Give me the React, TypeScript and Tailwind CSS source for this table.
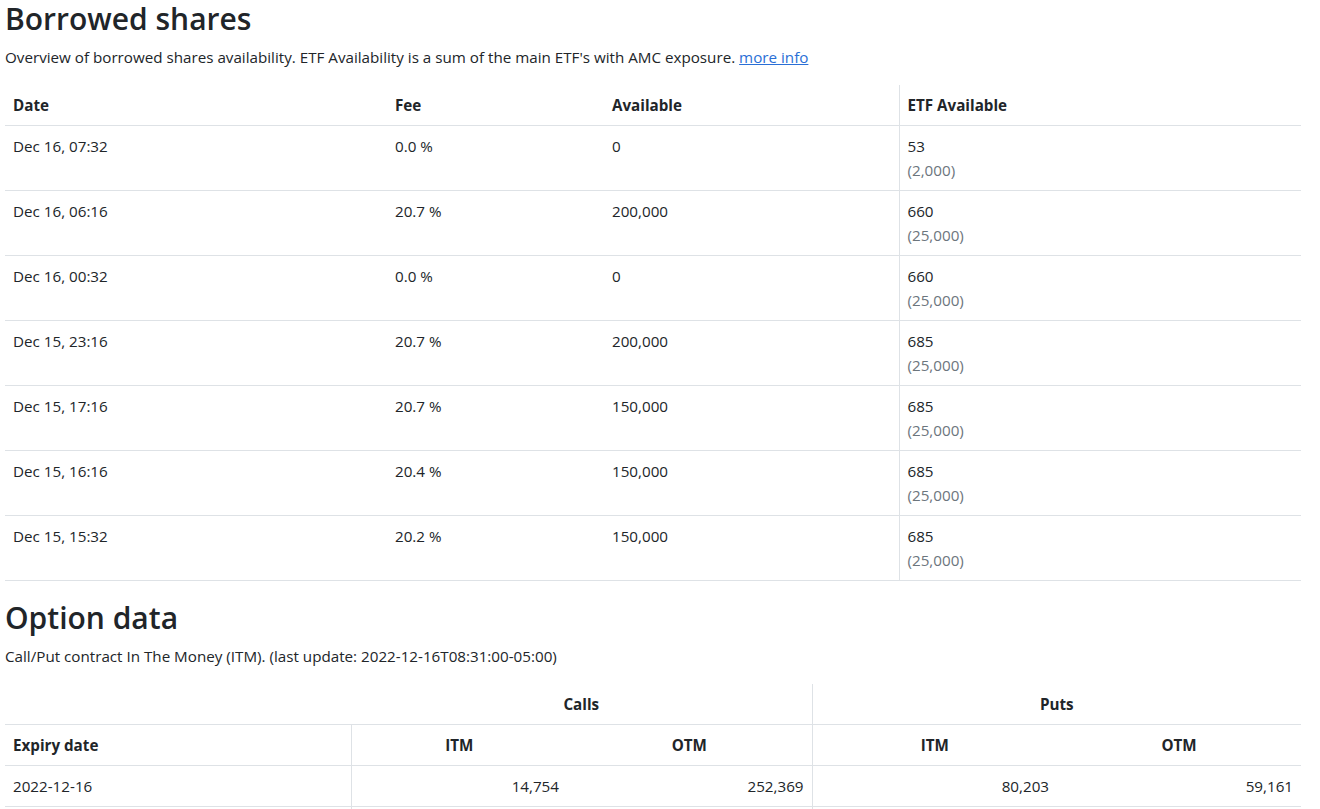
const borrowed = [
  { date: 'Dec 16, 07:32', fee: '0.0 %', available: '0', etf: '53', etfMax: '(2,000)' },
  { date: 'Dec 16, 06:16', fee: '20.7 %', available: '200,000', etf: '660', etfMax: '(25,000)' },
  { date: 'Dec 16, 00:32', fee: '0.0 %', available: '0', etf: '660', etfMax: '(25,000)' },
  { date: 'Dec 15, 23:16', fee: '20.7 %', available: '200,000', etf: '685', etfMax: '(25,000)' },
  { date: 'Dec 15, 17:16', fee: '20.7 %', available: '150,000', etf: '685', etfMax: '(25,000)' },
  { date: 'Dec 15, 16:16', fee: '20.4 %', available: '150,000', etf: '685', etfMax: '(25,000)' },
  { date: 'Dec 15, 15:32', fee: '20.2 %', available: '150,000', etf: '685', etfMax: '(25,000)' },
];

const options = [
  { expiry: '2022-12-16', callItm: '14,754', callOtm: '252,369', putItm: '80,203', putOtm: '59,161' },
];

export default function App() {
  return (
    <div
      className="min-h-screen bg-white pl-[5px] text-[15.2px] leading-6 text-[#212529]"
      style={{ fontFamily: '"Open Sans", "Noto Sans", sans-serif' }}
    >
      <div className="w-[1296px]">
        <h2 className="mb-2 text-[30px] font-semibold leading-[37px]">Borrowed shares</h2>
        <p className="mb-4">
          Overview of borrowed shares availability. ETF Availability is a sum of the main ETF's with AMC exposure.{' '}
          <a href="#" className="text-[#2a6fd6] underline">
            more info
          </a>
        </p>

        <table className="mb-[18px] w-full table-fixed border-collapse text-left">
          <colgroup>
            <col className="w-[382px]" />
            <col className="w-[217px]" />
            <col className="w-[295px]" />
            <col className="w-[402px]" />
          </colgroup>
          <thead>
            <tr className="border-b border-[#dee2e6]">
              <th className="p-2 font-bold">Date</th>
              <th className="p-2 font-bold">Fee</th>
              <th className="p-2 font-bold">Available</th>
              <th className="border-l border-[#dee2e6] p-2 font-bold">ETF Available</th>
            </tr>
          </thead>
          <tbody>
            {borrowed.map((row) => (
              <tr key={row.date} className="border-b border-[#dee2e6] align-top">
                <td className="p-2">{row.date}</td>
                <td className="p-2">{row.fee}</td>
                <td className="p-2">{row.available}</td>
                <td className="border-l border-[#dee2e6] p-2">
                  {row.etf}
                  <br />
                  <span className="text-[#6c757d]">{row.etfMax}</span>
                </td>
              </tr>
            ))}
          </tbody>
        </table>

        <h2 className="mb-2 text-[30px] font-semibold leading-[37px]">Option data</h2>
        <p className="mb-4">Call/Put contract In The Money (ITM). (last update: 2022-12-16T08:31:00-05:00)</p>

        <table className="w-full table-fixed border-collapse">
          <colgroup>
            <col className="w-[346px]" />
            <col className="w-[216px]" />
            <col className="w-[245px]" />
            <col className="w-[245px]" />
            <col className="w-[244px]" />
          </colgroup>
          <thead>
            <tr className="border-b border-[#dee2e6]">
              <th className="p-2"></th>
              <th colSpan={2} className="p-2 text-center font-bold">
                Calls
              </th>
              <th colSpan={2} className="border-l border-[#dee2e6] p-2 text-center font-bold">
                Puts
              </th>
            </tr>
            <tr className="border-b border-[#dee2e6]">
              <th className="p-2 text-left font-bold">Expiry date</th>
              <th className="border-l border-[#dee2e6] p-2 text-center font-bold">ITM</th>
              <th className="p-2 text-center font-bold">OTM</th>
              <th className="border-l border-[#dee2e6] p-2 text-center font-bold">ITM</th>
              <th className="p-2 text-center font-bold">OTM</th>
            </tr>
          </thead>
          <tbody>
            {options.map((row) => (
              <tr key={row.expiry} className="border-b border-[#dee2e6]">
                <td className="p-2">{row.expiry}</td>
                <td className="border-l border-[#dee2e6] p-2 text-right">{row.callItm}</td>
                <td className="p-2 text-right">{row.callOtm}</td>
                <td className="border-l border-[#dee2e6] p-2 text-right">{row.putItm}</td>
                <td className="p-2 text-right">{row.putOtm}</td>
              </tr>
            ))}
            <tr className="h-10">
              <td></td>
              <td className="border-l border-[#dee2e6]"></td>
              <td></td>
              <td className="border-l border-[#dee2e6]"></td>
              <td></td>
            </tr>
          </tbody>
        </table>
      </div>
    </div>
  );
}
